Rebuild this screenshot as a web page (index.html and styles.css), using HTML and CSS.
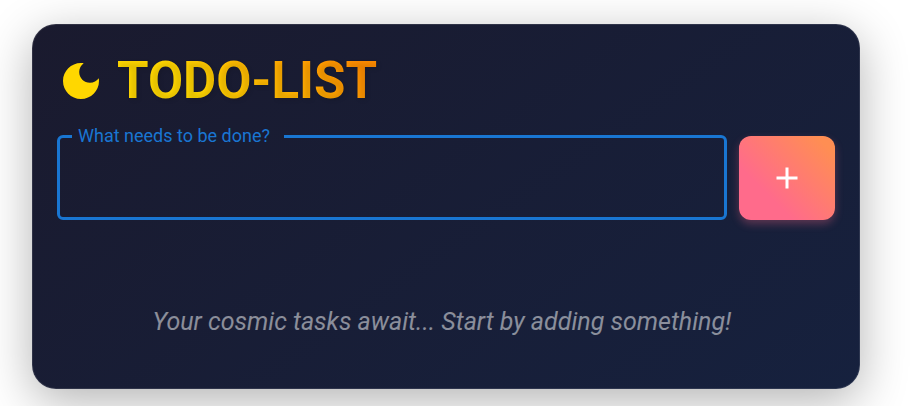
FILE: index.html
```html
<!DOCTYPE html>
<html lang="en">
<head>
<meta charset="utf-8">
<meta name="viewport" content="width=device-width, initial-scale=1">
<title>Todo List</title>
<link rel="stylesheet" href="styles.css">
</head>
<body>
<main class="card">
  <header class="header">
    <svg class="moon" viewBox="0 0 24 24" aria-hidden="true"><path d="M12 3c-4.970 0-9 4.030-9 9s4.030 9 9 9 9-4.030 9-9c0-.46-.04-.92-.1-1.360-.98 1.370-2.580 2.260-4.400 2.260-2.980 0-5.400-2.420-5.400-5.400 0-1.810.89-3.420 2.260-4.400C12.920 3.040 12.460 3 12 3z"/></svg>
    <h1 class="title">TODO-LIST</h1>
  </header>
  <form class="form">
    <fieldset class="field">
      <legend class="legend"><label for="task">What needs to be done?</label></legend>
      <input class="input" id="task" type="text">
    </fieldset>
    <button class="add" type="button" aria-label="Add task">
      <svg class="plus" viewBox="0 0 24 24" aria-hidden="true"><path d="M19 13h-6v6h-2v-6H5v-2h6V5h2v6h6v2z"/></svg>
    </button>
  </form>
  <p class="empty">Your cosmic tasks await... Start by adding something!</p>
</main>
</body>
</html>
```
FILE: styles.css
```css
* {
  box-sizing: border-box;
}

body {
  margin: 0;
  padding: 24px 56px 17px 32px;
  background: #fff;
  font-family: Roboto, sans-serif;
  overflow: hidden;
}

.card {
  padding: 24px;
  border: 1px solid rgba(255, 255, 255, 0.1);
  border-radius: 24px;
  background: linear-gradient(145deg, #1a1a2e, #16213e) border-box;
  box-shadow: 0 12px 48px rgba(0, 0, 0, 0.3);
}

.header {
  display: flex;
  align-items: center;
  gap: 12px;
  height: 63px;
  margin-bottom: 12px;
}

.moon {
  width: 48px;
  height: 48px;
  fill: #ffd700;
}

.title {
  margin: 0;
  font-size: 51px;
  line-height: 63px;
  font-weight: 700;
  color: transparent;
  background: linear-gradient(45deg, #ffd700 30%, #ff8c00 90%);
  background-clip: text;
  text-shadow: 2px 2px 4px rgba(0, 0, 0, 0.1);
}

.form {
  display: flex;
  align-items: flex-end;
  gap: 12px;
}

.field {
  flex: 1;
  min-width: 0;
  height: 96px;
  margin: 0;
  padding: 0 12px;
  border: 3px solid #1976d2;
  border-radius: 6px;
}

.legend {
  padding: 0 14px 0 6px;
  font-size: 18px;
  line-height: 24px;
  color: #1976d2;
}

.input {
  width: 100%;
  height: 64px;
  border: 0;
  outline: 0;
  background: transparent;
  color: #fff;
  font: 24px Roboto, sans-serif;
}

.add {
  display: flex;
  align-items: center;
  justify-content: center;
  width: 96px;
  height: 84px;
  padding: 0;
  border: 0;
  border-radius: 12px;
  background: linear-gradient(45deg, #ff6b8b 30%, #ff8e53 90%);
  box-shadow: 0 4px 8px rgba(255, 105, 135, 0.3);
}

.plus {
  width: 36px;
  height: 36px;
  fill: #fff;
}

.empty {
  margin: 84px 0 24px;
  padding-right: 8px;
  font-size: 25px;
  line-height: 36px;
  font-style: italic;
  text-align: center;
  color: rgba(255, 255, 255, 0.5);
}
```
